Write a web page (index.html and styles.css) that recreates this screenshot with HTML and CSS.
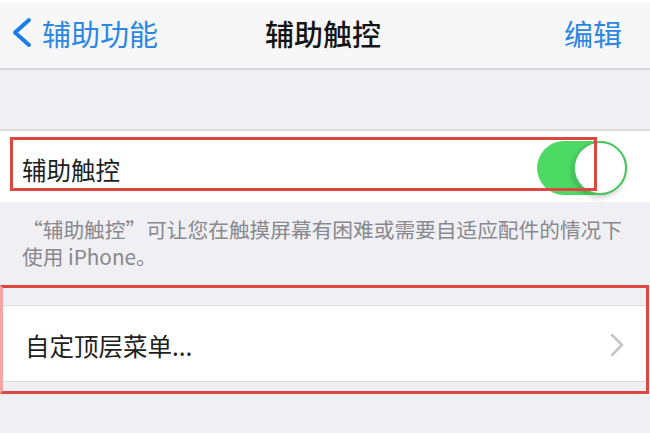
FILE: index.html
```html
<!DOCTYPE html>
<html lang="zh-CN">
<head>
    <meta charset="UTF-8">
    <link rel="stylesheet" href="styles.css">
</head>
<body>
    <div class="nav">
        <div class="nav_back">
            <svg class="back_icon" width="24" height="31" viewBox="0 0 24 31">
                <polyline points="19,3 5,15.5 19,28" fill="none" stroke="#1a7ee6" stroke-width="4" stroke-linecap="round" stroke-linejoin="round" />
            </svg>
            <span>辅助功能</span>
        </div>
        <div class="nav_title">辅助触控</div>
        <div class="nav_edit">编辑</div>
    </div>

    <div class="gap_top"></div>

    <div class="row row_toggle">
        <span class="row_label">辅助触控</span>
        <div class="switch">
            <div class="knob"></div>
        </div>
        <div class="mark mark_toggle"></div>
    </div>

    <div class="note">“辅助触控”可让您在触摸屏幕有困难或需要自适应配件的情况下<br>使用 iPhone。</div>

    <div class="mark_group">
        <div class="gap_small"></div>
        <div class="row row_menu">
            <span class="row_label">自定顶层菜单...</span>
            <svg class="chevron" width="16" height="24" viewBox="0 0 16 24">
                <polyline points="3,2 13,12 3,22" fill="none" stroke="#c4c4c9" stroke-width="2.5" stroke-linecap="round" stroke-linejoin="round" />
            </svg>
        </div>
        <div class="gap_bottom"></div>
    </div>
</body>
</html>
```

FILE: styles.css
```css
body {
    margin: 0;
    width: 650px;
    height: 433px;
    overflow: hidden;
    background-color: #efeff4;
    font-family: "Noto Sans CJK SC", "Noto Sans", sans-serif;
    color: #1c1c1c;
}

.nav {
    height: 65px;
    border-top: 3px solid #ffffff;
    border-bottom: 2px solid #d9d9dd;
    background-color: #f7f7f8;
    display: grid;
    grid-template-columns: 1fr auto 1fr;
    align-items: center;
}

.nav_back {
    display: flex;
    align-items: center;
    gap: 8px;
    padding-left: 10px;
    color: #2a87e3;
    font-size: 29px;
    margin-top: -6px;
}

.back_icon {
    display: block;
}

.nav_title {
    font-size: 29px;
    font-weight: 500;
    color: #151515;
    margin-top: -6px;
    margin-right: 4px;
}

.nav_edit {
    justify-self: end;
    padding-right: 28px;
    font-size: 29px;
    color: #2a87e3;
    margin-top: -6px;
}

.gap_top {
    height: 59px;
    border-bottom: 2px solid #dcdce0;
}

.row {
    background-color: #ffffff;
    display: flex;
    align-items: center;
    justify-content: space-between;
    position: relative;
}

.row_label {
    font-size: 24.5px;
    color: #1e1e1e;
}

.row_toggle {
    height: 71px;
    padding: 0 23px 0 22px;
}

.row_toggle .row_label {
    margin-top: 6px;
}

.switch {
    width: 90px;
    height: 54px;
    border-radius: 27px;
    background-color: #4cd964;
    position: relative;
    margin-top: 2px;
}

.knob {
    position: absolute;
    right: 0;
    top: 0;
    width: 50px;
    height: 50px;
    border-radius: 50%;
    background-color: #ffffff;
    border: 2px solid #4cc462;
    box-shadow: -1px 3px 5px rgba(0, 0, 0, 0.18);
}

.mark {
    position: absolute;
    border: 3px solid #dc4741;
    box-sizing: border-box;
}

.mark_toggle {
    left: 10px;
    top: 6px;
    width: 587px;
    height: 54px;
}

.note {
    height: 83px;
    box-sizing: border-box;
    padding: 14px 0 0 22px;
    font-size: 20.7px;
    line-height: 27px;
    white-space: nowrap;
    color: #88888d;
}

.mark_group {
    border: 3px solid #dc4741;
    border-left-color: #f2a5a2;
    margin: 0 1px 0 0;
}

.gap_small {
    height: 17px;
    border-bottom: 1px solid #dcdce0;
}

.row_menu {
    height: 75px;
    padding: 0 21px 0 22px;
    border-bottom: 1px solid #dcdce0;
}

.row_menu .row_label {
    margin-top: 4px;
}

.chevron {
    display: block;
    margin-top: 2px;
}

.gap_bottom {
    height: 9px;
}
```
